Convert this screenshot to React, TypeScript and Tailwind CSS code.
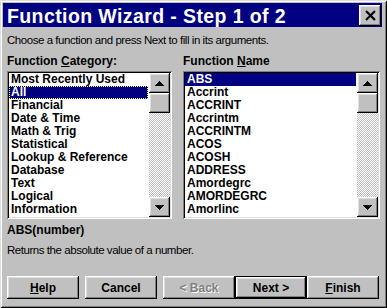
import React from "react";

const raised =
  "shadow-[inset_-1px_-1px_#000,inset_1px_1px_#fff,inset_-2px_-2px_#808080,inset_2px_2px_#dfdfdf]";
const sunken =
  "shadow-[inset_1px_1px_#808080,inset_-1px_-1px_#fff,inset_2px_2px_#000,inset_-2px_-2px_#dfdfdf]";

const categories = [
  "Most Recently Used",
  "All",
  "Financial",
  "Date & Time",
  "Math & Trig",
  "Statistical",
  "Lookup & Reference",
  "Database",
  "Text",
  "Logical",
  "Information",
];

const names = [
  "ABS",
  "Accrint",
  "ACCRINT",
  "Accrintm",
  "ACCRINTM",
  "ACOS",
  "ACOSH",
  "ADDRESS",
  "Amordegrc",
  "AMORDEGRC",
  "Amorlinc",
];

function Arrow({ up }: { up: boolean }) {
  return (
    <svg width="9" height="5" viewBox="0 0 9 5" shapeRendering="crispEdges">
      {up ? (
        <polygon points="4.5,0 9,5 0,5" fill="#000" />
      ) : (
        <polygon points="0,0 9,0 4.5,5" fill="#000" />
      )}
    </svg>
  );
}

function ScrollBar() {
  return (
    <div className="flex w-[21px] flex-col">
      <div className={`flex h-[20px] w-[21px] items-center justify-center bg-[#c0c0c0] ${raised}`}>
        <Arrow up />
      </div>
      <div className={`h-[20px] w-[21px] bg-[#c0c0c0] ${raised}`} />
      <div className="flex-1 bg-[repeating-conic-gradient(#c0c0c0_0%_25%,#ffffff_0%_50%)] bg-[length:2px_2px]" />
      <div className={`flex h-[20px] w-[21px] items-center justify-center bg-[#c0c0c0] ${raised}`}>
        <Arrow up={false} />
      </div>
    </div>
  );
}

function ListBox({
  items,
  width,
  selected,
  focus,
}: {
  items: string[];
  width: string;
  selected: number;
  focus: boolean;
}) {
  return (
    <div className={`flex h-[148px] ${width} bg-white p-[2px] ${sunken}`}>
      <div className="flex-1 overflow-hidden bg-white pr-[1px]">
        {items.map((it, i) => (
          <div
            key={it}
            className={
              i === selected
                ? focus
                  ? "h-[13px] bg-[#000080] pl-[2px] text-[12px] font-bold leading-[13px] text-white outline-1 -outline-offset-1 outline-dotted outline-[#ffff80]"
                  : "h-[13px] bg-[#000080] pl-[2px] text-[12px] font-bold leading-[13px] text-white"
                : "h-[13px] pl-[2px] text-[12px] font-bold leading-[13px] text-black"
            }
          >
            {it}
          </div>
        ))}
      </div>
      <ScrollBar />
    </div>
  );
}

function Button({
  children,
  disabled,
  def,
  className = "",
}: {
  children: React.ReactNode;
  disabled?: boolean;
  def?: boolean;
  className?: string;
}) {
  if (def) {
    return (
      <div className={`h-[23px] w-[72px] border border-black ${className}`}>
        <div
          className={`flex h-full w-full items-center justify-center bg-[#c0c0c0] text-[12px] font-bold text-black ${raised}`}
        >
          {children}
        </div>
      </div>
    );
  }
  return (
    <div
      className={`flex h-[23px] w-[72px] items-center justify-center bg-[#c0c0c0] text-[12px] font-bold ${raised} ${
        disabled ? "text-[#808080] [text-shadow:1px_1px_0_#fff]" : "text-black"
      } ${className}`}
    >
      {children}
    </div>
  );
}

export default function App() {
  return (
    <div
      className={`flex h-[308px] w-[387px] flex-col bg-[#c0c0c0] pl-[3px] pr-[4px] pt-[3px] shadow-[inset_1px_1px_#dfdfdf,inset_-1px_-1px_#000,inset_2px_2px_#fff,inset_-2px_-2px_#808080]`}
      style={{ fontFamily: '"Liberation Sans", Arial, sans-serif' }}
    >
      {/* title bar */}
      <div className="flex h-[24px] w-[379px] items-center justify-between bg-[#000080] pl-[4px] pr-[1px]">
        <span className="pt-[2px] text-[19.5px] font-bold leading-[22px] tracking-[0.4px] text-white">
          Function Wizard - Step 1 of 2
        </span>
        <div className={`flex h-[21px] w-[22px] items-center justify-center bg-[#c0c0c0] ${raised}`}>
          <svg width="11" height="11" viewBox="0 0 11 11">
            <path d="M1 1 L10 10 M10 1 L1 10" stroke="#000" strokeWidth="2.2" />
          </svg>
        </div>
      </div>

      <div className="flex flex-col px-[4px]">
        <div className="mt-[6px] h-[14px] text-[11.5px] leading-[14px] tracking-[-0.45px] text-black">
          Choose a function and press Next to fill in its arguments.
        </div>

        <div className="mt-[7px] flex gap-[11px]">
          <div className="flex flex-col">
            <div className="mb-[3px] h-[14px] text-[12px] font-bold leading-[14px] text-black">
              Function <u>C</u>ategory:
            </div>
            <ListBox items={categories} width="w-[165px]" selected={1} focus />
          </div>
          <div className="flex flex-col">
            <div className="mb-[3px] h-[14px] text-[12px] font-bold leading-[14px] text-black">
              Function <u>N</u>ame
            </div>
            <ListBox items={names} width="w-[197px]" selected={0} focus={false} />
          </div>
        </div>

        <div className="mt-[4px] h-[14px] text-[12px] font-bold leading-[14px] text-black">
          ABS(number)
        </div>
        <div className="mt-[6px] h-[14px] text-[11.5px] leading-[14px] tracking-[-0.45px] text-black">
          Returns the absolute value of a number.
        </div>

        <div className="mt-[19px] flex">
          <Button>
            <span>
              <u>H</u>elp
            </span>
          </Button>
          <Button className="ml-[6px]">Cancel</Button>
          <Button className="ml-[6px]" disabled>
            &lt; Back
          </Button>
          <Button def>Next &gt;</Button>
          <Button>
            <span>
              <u>F</u>inish
            </span>
          </Button>
        </div>
      </div>
    </div>
  );
}
